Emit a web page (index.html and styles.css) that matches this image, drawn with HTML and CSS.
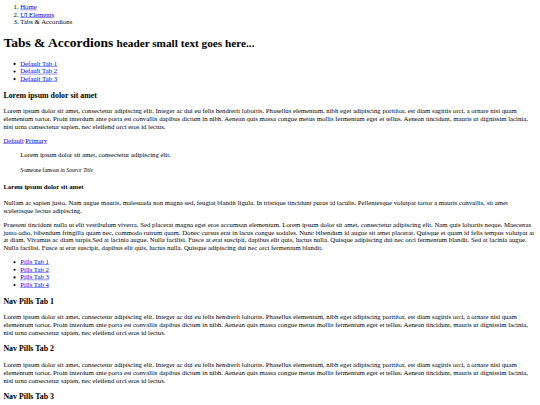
FILE: index.html
```html
<!DOCTYPE html>
<html>
<head>
<meta charset="utf-8">
<title>Tabs &amp; Accordions</title>
<link rel="stylesheet" href="styles.css">
</head>
<body>
<div class="page">
<ol class="breadcrumb">
  <li><a href="#">Home</a></li>
  <li><a href="#">UI Elements</a></li>
  <li>Tabs &amp; Accordions</li>
</ol>
<h1>Tabs &amp; Accordions <small>header small text goes here...</small></h1>
<ul class="nav-tabs">
  <li><a href="#">Default Tab 1</a></li>
  <li><a href="#">Default Tab 2</a></li>
  <li><a href="#">Default Tab 3</a></li>
</ul>
<h3>Lorem ipsum dolor sit amet</h3>
<p>Lorem ipsum dolor sit amet, consectetur adipiscing elit. Integer ac dui eu felis hendrerit lobortis. Phasellus elementum, nibh eget adipiscing porttitor, est diam sagittis orci, a ornare nisi quam elementum tortor. Proin interdum ante porta est convallis dapibus dictum in nibh. Aenean quis massa congue metus mollis fermentum eget et tellus. Aenean tincidunt, mauris ut dignissim lacinia, nisi urna consectetur sapien, nec eleifend orci eros id lectus.</p>
<p><a href="#">Default</a> <a href="#">Primary</a></p>
<blockquote>
  <p>Lorem ipsum dolor sit amet, consectetur adipiscing elit.</p>
  <footer><small>Someone famous in <cite title="Source Title">Source Title</cite></small></footer>
</blockquote>
<h4>Lorem ipsum dolor sit amet</h4>
<p>Nullam ac sapien justo. Nam augue mauris, malesuada non magna sed, feugiat blandit ligula. In tristique tincidunt purus id iaculis. Pellentesque volutpat tortor a mauris convallis, sit amet scelerisque lectus adipiscing.</p>
<p>Praesent tincidunt nulla ut elit vestibulum viverra. Sed placerat magna eget eros accumsan elementum. Lorem ipsum dolor sit amet, consectetur adipiscing elit. Nam quis lobortis neque. Maecenas justo odio, bibendum fringilla quam nec, commodo rutrum quam. Donec cursus erat in lacus congue sodales. Nunc bibendum id augue sit amet placerat. Quisque et quam id felis tempus volutpat at at diam. Vivamus ac diam turpis.Sed at lacinia augue. Nulla facilisi. Fusce at erat suscipit, dapibus elit quis, luctus nulla. Quisque adipiscing dui nec orci fermentum blandit. Sed at lacinia augue. Nulla facilisi. Fusce at erat suscipit, dapibus elit quis, luctus nulla. Quisque adipiscing dui nec orci fermentum blandit.</p>
<ul class="nav-pills">
  <li><a href="#">Pills Tab 1</a></li>
  <li><a href="#">Pills Tab 2</a></li>
  <li><a href="#">Pills Tab 3</a></li>
  <li><a href="#">Pills Tab 4</a></li>
</ul>
<h3>Nav Pills Tab 1</h3>
<p>Lorem ipsum dolor sit amet, consectetur adipiscing elit. Integer ac dui eu felis hendrerit lobortis. Phasellus elementum, nibh eget adipiscing porttitor, est diam sagittis orci, a ornare nisi quam elementum tortor. Proin interdum ante porta est convallis dapibus dictum in nibh. Aenean quis massa congue metus mollis fermentum eget et tellus. Aenean tincidunt, mauris ut dignissim lacinia, nisi urna consectetur sapien, nec eleifend orci eros id lectus.</p>
<h3>Nav Pills Tab 2</h3>
<p>Lorem ipsum dolor sit amet, consectetur adipiscing elit. Integer ac dui eu felis hendrerit lobortis. Phasellus elementum, nibh eget adipiscing porttitor, est diam sagittis orci, a ornare nisi quam elementum tortor. Proin interdum ante porta est convallis dapibus dictum in nibh. Aenean quis massa congue metus mollis fermentum eget et tellus. Aenean tincidunt, mauris ut dignissim lacinia, nisi urna consectetur sapien, nec eleifend orci eros id lectus.</p>
<h3>Nav Pills Tab 3</h3>
<p>Lorem ipsum dolor sit amet, consectetur adipiscing elit. Integer ac dui eu felis hendrerit lobortis. Phasellus elementum, nibh eget adipiscing porttitor, est diam sagittis orci, a ornare nisi quam elementum tortor. Proin interdum ante porta est convallis dapibus dictum in nibh. Aenean quis massa congue metus mollis fermentum eget et tellus. Aenean tincidunt, mauris ut dignissim lacinia, nisi urna consectetur sapien, nec eleifend orci eros id lectus.</p>
</div>
</body>
</html>
```

FILE: styles.css
```css
html, body {
  margin: 0;
  padding: 0;
  background: #ffffff;
  overflow: hidden;
}
.page {
  width: 1280px;
  padding: 8px;
  box-sizing: border-box;
  font-family: "Liberation Serif", "Times New Roman", serif;
  font-size: 16px;
  color: #000000;
  transform: scale(0.421875);
  transform-origin: 0 0;
}
.breadcrumb {
  margin-top: 0;
}
```
